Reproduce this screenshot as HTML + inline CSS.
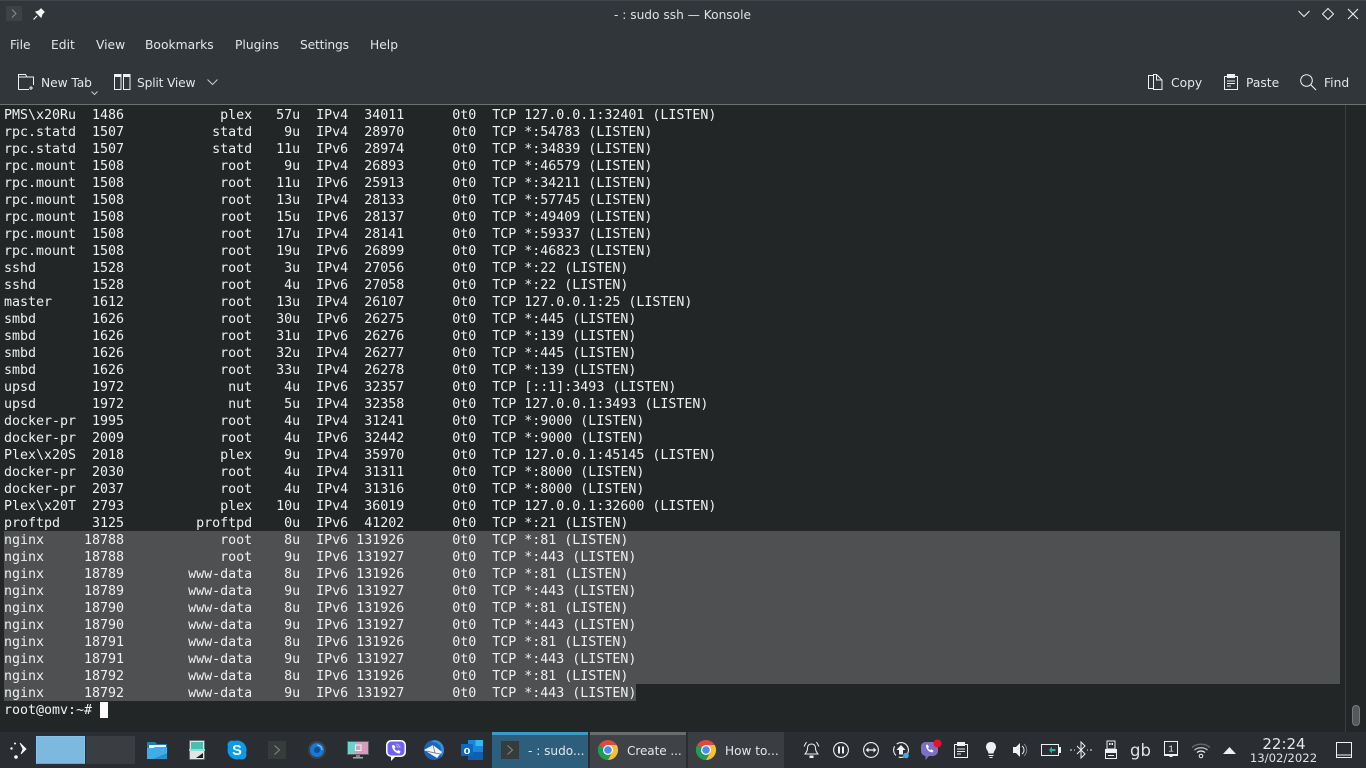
<!DOCTYPE html>
<html><head><meta charset="utf-8"><title>- : sudo ssh — Konsole</title>
<style>
html,body{margin:0;padding:0;background:#232627;width:1366px;height:768px;overflow:hidden}
body{position:relative;font-family:"DejaVu Sans",sans-serif;color:#eff0f1}
.a{position:absolute}
#top{left:0;top:0;width:1366px;height:104px;background:#31363b}
#strip{left:0;top:0;width:1366px;height:1px;background:#41464c}
#line{left:0;top:104px;width:1366px;height:1px;background:#6d7073}
#title{left:0;top:6px;width:1366px;text-align:center;font-size:12.200px;line-height:18px;color:#dfe1e3;padding-right:1px;box-sizing:border-box}
.m{top:37px;font-size:12.300px;line-height:17px;color:#e4e6e8;white-space:nowrap}
.t{top:75px;font-size:12.300px;line-height:17px;color:#e4e6e8;white-space:nowrap}
#term{left:4px;top:107px;margin:0;font-family:"DejaVu Sans Mono",monospace;font-size:13.330px;line-height:17px;color:#eff0f1;white-space:pre;letter-spacing:-.02px}
.s{background:#4f5052;left:4px;width:1336px;top:531px;height:153px}
#bar{left:0;top:732px;width:1366px;height:36px;background:#2a2e32}
.tk{top:732px;height:36px;width:96px}
.tt{top:743px;font-size:12.100px;line-height:17px;color:#e4e6e8;white-space:nowrap}
svg{position:absolute;overflow:visible}
</style></head><body>
<div class="a" id="top"></div><div class="a" id="strip"></div><div class="a" id="line"></div>

<svg style="left:6px;top:6px" width="16" height="16"><rect width="16" height="15" fill="#3d4244"/><path d="M6 3.500l4 4-4 4" fill="none" stroke="#8b8f91"/></svg>
<svg style="left:32px;top:7px" width="14" height="14"><path d="M1.500 12.500l3.500-3.500M4 5l5 5 1-3 2-2-3-3-2 2z" fill="#f4f5f5" stroke="#f4f5f5" stroke-width="1.200"/></svg>
<div class="a" id="title">- : sudo ssh — Konsole</div>
<svg style="left:1298px;top:9px" width="12" height="10"><path d="M.5 2l5.500 5.500L11.500 2" fill="none" stroke="#eff0f1"/></svg>
<svg style="left:1322px;top:8px" width="12" height="12"><path d="M6 .5L11.500 6 6 11.500 .5 6z" fill="none" stroke="#eff0f1"/></svg>
<svg style="left:1347px;top:8px" width="12" height="12"><path d="M1 1l10 10M11 1L1 11" fill="none" stroke="#eff0f1" stroke-width="1.100"/></svg>

<div class="a m" style="left:10px">File</div>
<div class="a m" style="left:51px">Edit</div>
<div class="a m" style="left:96px">View</div>
<div class="a m" style="left:145px">Bookmarks</div>
<div class="a m" style="left:235px">Plugins</div>
<div class="a m" style="left:300px;letter-spacing:-.2px">Settings</div>
<div class="a m" style="left:370px">Help</div>

<svg style="left:18px;top:74px" width="17" height="17"><path d="M.5 15.500V.5h7l1.500 2.500h6.500V11M.5 15.500H11M.5 3h8" fill="none" stroke="#eff0f1"/><path d="M13 12v4M11 14h4" stroke="#eff0f1"/></svg>
<div class="a t" style="left:41px;letter-spacing:-.1px">New Tab</div>
<svg style="left:91px;top:91px" width="7" height="5"><path d="M.5.500L3.500 3.500 6.500.5" fill="none" stroke="#c8cacc"/></svg>
<svg style="left:114px;top:74px" width="17" height="16"><path d="M.5.500h6.500v15H.5zM9.500.5H16v15H9.500z" fill="none" stroke="#eff0f1"/><path d="M0 0h7.500v3H0zM9 0h7.500v3H9z" fill="#eff0f1"/></svg>
<div class="a t" style="left:137px;letter-spacing:-.2px">Split View</div>
<svg style="left:207px;top:79px" width="11" height="7"><path d="M.5.500l5 5 5-5" fill="none" stroke="#c8cacc"/></svg>

<svg style="left:1148px;top:74px" width="15" height="16"><path d="M.5 1.500h5v13H.5zM5.500 .5h3L14 6v9.500H5.500z" fill="none" stroke="#eff0f1"/><path d="M8.500 .5V6H14" fill="none" stroke="#eff0f1"/></svg>
<div class="a t" style="left:1171px">Copy</div>
<svg style="left:1224px;top:74px" width="15" height="16"><rect x=".5" y="2.500" width="13" height="13" fill="none" stroke="#eff0f1"/><rect x="3" y="0" width="8" height="4" fill="#eff0f1"/><path d="M3 7h8M3 9.500h8M3 12h4" stroke="#eff0f1"/></svg>
<div class="a t" style="left:1246px">Paste</div>
<svg style="left:1300px;top:74px" width="17" height="17"><circle cx="6.500" cy="6.500" r="5.800" fill="none" stroke="#eff0f1"/><path d="M10.500 10.500L16 16" stroke="#eff0f1" stroke-width="1.100"/></svg>
<div class="a t" style="left:1324px">Find</div>

<div class="a s"></div>
<div class="a" style="background:#4f5052;left:4px;width:632px;top:684px;height:17px"></div>
<div class="a" style="left:100px;top:702px;width:8px;height:16px;background:#fcfcfc"></div>
<div class="a" style="left:1345px;top:105px;width:1px;height:627px;background:#3a3e40"></div>
<div class="a" style="left:1352px;top:705px;width:8px;height:21px;border-radius:4px;background:#55585a;border:1px solid #76797b;box-sizing:border-box"></div>

<pre class="a" id="term">PMS\x20Ru  1486            plex   57u  IPv4  34011      0t0  TCP 127.0.0.1:32401 (LISTEN)
rpc.statd  1507           statd    9u  IPv4  28970      0t0  TCP *:54783 (LISTEN)
rpc.statd  1507           statd   11u  IPv6  28974      0t0  TCP *:34839 (LISTEN)
rpc.mount  1508            root    9u  IPv4  26893      0t0  TCP *:46579 (LISTEN)
rpc.mount  1508            root   11u  IPv6  25913      0t0  TCP *:34211 (LISTEN)
rpc.mount  1508            root   13u  IPv4  28133      0t0  TCP *:57745 (LISTEN)
rpc.mount  1508            root   15u  IPv6  28137      0t0  TCP *:49409 (LISTEN)
rpc.mount  1508            root   17u  IPv4  28141      0t0  TCP *:59337 (LISTEN)
rpc.mount  1508            root   19u  IPv6  26899      0t0  TCP *:46823 (LISTEN)
sshd       1528            root    3u  IPv4  27056      0t0  TCP *:22 (LISTEN)
sshd       1528            root    4u  IPv6  27058      0t0  TCP *:22 (LISTEN)
master     1612            root   13u  IPv4  26107      0t0  TCP 127.0.0.1:25 (LISTEN)
smbd       1626            root   30u  IPv6  26275      0t0  TCP *:445 (LISTEN)
smbd       1626            root   31u  IPv6  26276      0t0  TCP *:139 (LISTEN)
smbd       1626            root   32u  IPv4  26277      0t0  TCP *:445 (LISTEN)
smbd       1626            root   33u  IPv4  26278      0t0  TCP *:139 (LISTEN)
upsd       1972             nut    4u  IPv6  32357      0t0  TCP [::1]:3493 (LISTEN)
upsd       1972             nut    5u  IPv4  32358      0t0  TCP 127.0.0.1:3493 (LISTEN)
docker-pr  1995            root    4u  IPv4  31241      0t0  TCP *:9000 (LISTEN)
docker-pr  2009            root    4u  IPv6  32442      0t0  TCP *:9000 (LISTEN)
Plex\x20S  2018            plex    9u  IPv4  35970      0t0  TCP 127.0.0.1:45145 (LISTEN)
docker-pr  2030            root    4u  IPv4  31311      0t0  TCP *:8000 (LISTEN)
docker-pr  2037            root    4u  IPv4  31316      0t0  TCP *:8000 (LISTEN)
Plex\x20T  2793            plex   10u  IPv4  36019      0t0  TCP 127.0.0.1:32600 (LISTEN)
proftpd    3125         proftpd    0u  IPv6  41202      0t0  TCP *:21 (LISTEN)
nginx     18788            root    8u  IPv6 131926      0t0  TCP *:81 (LISTEN)
nginx     18788            root    9u  IPv6 131927      0t0  TCP *:443 (LISTEN)
nginx     18789        www-data    8u  IPv6 131926      0t0  TCP *:81 (LISTEN)
nginx     18789        www-data    9u  IPv6 131927      0t0  TCP *:443 (LISTEN)
nginx     18790        www-data    8u  IPv6 131926      0t0  TCP *:81 (LISTEN)
nginx     18790        www-data    9u  IPv6 131927      0t0  TCP *:443 (LISTEN)
nginx     18791        www-data    8u  IPv6 131926      0t0  TCP *:81 (LISTEN)
nginx     18791        www-data    9u  IPv6 131927      0t0  TCP *:443 (LISTEN)
nginx     18792        www-data    8u  IPv6 131926      0t0  TCP *:81 (LISTEN)
nginx     18792        www-data    9u  IPv6 131927      0t0  TCP *:443 (LISTEN)
root@omv:~# </pre>

<div class="a" id="bar"></div>
<!-- kicker -->
<svg style="left:9px;top:742px" width="18" height="18"><circle cx="2.500" cy="6.500" r="1.200" fill="#fff"/><circle cx="6" cy="1.500" r="1" fill="#fff"/><circle cx="7" cy="15" r="1.800" fill="#fff"/><path d="M11 1l6 6-5 5 2-5z" fill="#fff" stroke="#fff" stroke-width=".8"/></svg>
<!-- pager -->
<div class="a" style="left:36px;top:736px;width:49px;height:28px;background:#7db8de;border:1px solid #86c4ea;border-bottom:1px solid #5aa9dc;box-sizing:border-box"></div>
<div class="a" style="left:86px;top:736px;width:49px;height:28px;background:#3a3e43"></div>

<!-- folder -->
<svg style="left:147px;top:741px" width="20" height="18"><path d="M0 1h8l2 2h10v15H0z" fill="#1d7fb3"/><rect x="2" y="4" width="17" height="3" fill="#fff"/><path d="M0 7h6l2-1h12v12H0z" fill="#3daee9"/><path d="M20 12v6H6z" fill="#2a8fc7"/></svg>
<!-- image viewer -->
<svg style="left:189px;top:740px" width="16" height="20"><rect x=".5" y=".5" width="15" height="19" rx="1" fill="#e4e4e4" stroke="#6b6e70"/><rect x="2" y="2" width="12" height="8" fill="#49bfae"/><rect x="0" y="9" width="16" height="2" fill="#7fe6d8"/><path d="M14 18H7l7-5z" fill="#1c1e20"/></svg>
<!-- skype -->
<svg style="left:227px;top:740px" width="20" height="20"><circle cx="10" cy="10" r="9.500" fill="#0a9bea"/><circle cx="5" cy="5" r="4.500" fill="#0a9bea"/><circle cx="15" cy="15" r="4.500" fill="#0a9bea"/><text x="10" y="15" text-anchor="middle" font-family="Liberation Sans" font-weight="bold" font-size="14.500" fill="#fff">S</text></svg>
<!-- konsole -->
<svg style="left:268px;top:741px" width="18" height="18"><rect width="18" height="18" fill="#363b3c"/><path d="M6.500 4.500l5 4.500-5 4.500" fill="none" stroke="#85898a" stroke-width="1"/></svg>
<!-- circle -->
<svg style="left:308px;top:741px" width="18" height="18"><circle cx="9" cy="9" r="9" fill="#3a4248"/><circle cx="9" cy="9" r="7" fill="#1a78d6"/><circle cx="9" cy="9" r="3" fill="#124d8c"/><path d="M9 4a5 5 0 0 1 5 5" stroke="#8fc8f2" fill="none"/></svg>
<!-- monitor -->
<svg style="left:347px;top:741px" width="22" height="19"><rect y="0" width="22" height="14" fill="#5d6163"/><rect x="1" y="1" width="20" height="12" fill="#6fd0cc"/><path d="M11 1h10v12H7z" fill="#d79cbc"/><rect x="8.500" y="4" width="5.500" height="5.500" fill="none" stroke="#f4f4f4"/><rect x="9" y="14" width="4" height="2" fill="#7f8385"/><rect x="6" y="16" width="10" height="1.500" fill="#a4a7a9"/></svg>
<!-- viber -->
<svg style="left:385px;top:739px" width="22" height="23"><path d="M6 1h10a5 5 0 0 1 5 5v7a5 5 0 0 1-5 5H10l-4 4v-4.200A5 5 0 0 1 1 13V6a5 5 0 0 1 5-5z" fill="#fff"/><path d="M6.500 2.500h9a4 4 0 0 1 4 4v6a4 4 0 0 1-4 4h-9a4 4 0 0 1-4-4v-6a4 4 0 0 1 4-4z" fill="#7360f2"/><path d="M7 6.500l2-.8 1.500 2.500-1 1.200c.5 1.200 1.400 2.100 2.600 2.600l1.200-1 2.200 1.500-.8 2c-4 .2-8-4-7.700-8z" fill="#fff"/><path d="M11 5a4 4 0 0 1 4 4M11 7a2 2 0 0 1 2 2" fill="none" stroke="#c9c2f7" stroke-width=".8"/></svg>
<!-- thunderbird -->
<svg style="left:423px;top:740px" width="22" height="20"><circle cx="11" cy="10" r="10" fill="#1d63b8"/><path d="M11 0a10 10 0 0 1 10 10c0 3-1 5-3 7V8C16 3 12 2 8 2z" fill="#2f8fe0"/><path d="M1 10l9-5 9 7-5 6z" fill="#f2f3f5"/><path d="M3 11l9 2 5 1M10 5l2 8" stroke="#5f6b80" stroke-width=".7" fill="none"/></svg>
<!-- outlook -->
<svg style="left:461px;top:740px" width="22" height="20"><rect x="7" y="0" width="15" height="19" fill="#1a86d8"/><rect x="14.500" y="0" width="7.500" height="6" fill="#35b8f0"/><rect x="7" y="12" width="15" height="8" fill="#0f5fae"/><rect x="0" y="4" width="12" height="12" rx="1" fill="#0a6ac2"/><text x="6" y="14" text-anchor="middle" font-family="Liberation Sans" font-weight="bold" font-size="11" fill="#fff">o</text></svg>

<!-- tasks -->
<div class="a tk" style="left:492px;background:#2d5f7d"></div>
<div class="a" style="left:492px;top:732px;width:96px;height:3px;background:#3a9bcb"></div>
<svg style="left:501px;top:741px" width="18" height="18"><rect width="18" height="18" fill="#363b3c"/><path d="M6.500 4.500l5 4.500-5 4.500" fill="none" stroke="#85898a"/></svg>
<div class="a tt" style="left:528px">- : sudo...</div>

<div class="a tk" style="left:590px;background:#3f4348"></div>
<div class="a" style="left:590px;top:732px;width:96px;height:3px;background:#6a6d70"></div>
<svg style="left:598px;top:740px" width="20" height="20"><circle cx="10" cy="10" r="10" fill="#dd4b3e"/><path d="M10 10L1.300 5A10 10 0 0 0 10 20l5-8.700z" fill="#1f9d55"/><path d="M10 5h8.700A10 10 0 0 1 10 20l4.500-8z" fill="#fbc02d"/><circle cx="10" cy="10" r="5" fill="#fff"/><circle cx="10" cy="10" r="3.800" fill="#4b8bf5"/></svg>
<div class="a tt" style="left:627px;letter-spacing:-.1px">Create ...</div>

<div class="a tk" style="left:688px;background:#3a3e43"></div>
<svg style="left:696px;top:740px" width="20" height="20"><circle cx="10" cy="10" r="10" fill="#dd4b3e"/><path d="M10 10L1.300 5A10 10 0 0 0 10 20l5-8.700z" fill="#1f9d55"/><path d="M10 5h8.700A10 10 0 0 1 10 20l4.500-8z" fill="#fbc02d"/><circle cx="10" cy="10" r="5" fill="#fff"/><circle cx="10" cy="10" r="3.800" fill="#4b8bf5"/></svg>
<div class="a tt" style="left:725px">How to...</div>

<!-- tray -->
<svg style="left:803px;top:741px" width="17" height="18"><path d="M8.500 3c-3 0-4 2-4 4.500 0 3-1.500 4-2.500 5.500h13c-1-1.500-2.500-2.500-2.500-5.500C12.500 5 11.500 3 8.500 3z" fill="none" stroke="#eff0f1"/><path d="M6.500 14.500h4V17h-4z" fill="#eff0f1"/><path d="M1 5.500L3.500 1M16 5.500L13.500 1" stroke="#eff0f1" fill="none"/></svg>
<svg style="left:833px;top:742px" width="16" height="16"><circle cx="8" cy="8" r="7.400" fill="none" stroke="#eff0f1" stroke-width="1.100"/><path d="M5 4.500h2v7H5zM9 4.500h2v7H9z" fill="#eff0f1"/></svg>
<svg style="left:863px;top:742px" width="16" height="16"><circle cx="8" cy="8" r="7.400" fill="none" stroke="#eff0f1" stroke-width="1.100"/><path d="M5 8h6" stroke="#eff0f1" stroke-width="1.300"/><path d="M2.700 8L5.500 5.500v5zM13.300 8L10.500 5.500v5z" fill="#eff0f1"/></svg>
<svg style="left:893px;top:742px" width="18" height="18"><circle cx="8" cy="8" r="7.400" fill="none" stroke="#eff0f1" stroke-width="1.100" stroke-dasharray="14 3 10 3 20 0"/><path d="M8 3l4.500 5H10v4.500H6V8H3.500z" fill="#eff0f1"/><circle cx="13" cy="13.500" r="2.800" fill="#3daee9"/></svg>
<svg style="left:920px;top:739px" width="22" height="22"><path d="M5 3h8a5 5 0 0 1 5 5v4a5 5 0 0 1-5 5H9l-3.500 4v-4A5 5 0 0 1 1 12V7a5 5 0 0 1 4-4z" fill="#7e6fc4"/><path d="M6 6l1.500-.5 1.500 2.500-1 1c.5 1 1.200 1.700 2.200 2.200l1-1 2.300 1.500-.6 1.500C9.500 14 5.700 10 6 6z" fill="#fff"/><circle cx="17.500" cy="4.500" r="4" fill="#e8102a"/></svg>
<svg style="left:954px;top:742px" width="14" height="16"><rect x=".5" y="2.500" width="13" height="13" fill="none" stroke="#eff0f1"/><rect x="3" y="0" width="8" height="4" fill="#eff0f1"/><path d="M3 7h8M3 9.500h8M3 12h4" stroke="#eff0f1"/></svg>
<svg style="left:985px;top:742px" width="12" height="16"><path d="M6 0c3.300 0 5 2.300 5 5 0 2.500-2 3.500-2.500 6.500h-5C3 8.500 1 7.500 1 5c0-2.700 1.700-5 5-5z" fill="#eff0f1"/><path d="M3.500 13h5v1h-5zM4.500 15h3v1h-3z" fill="#eff0f1"/></svg>
<svg style="left:1013px;top:742px" width="17" height="16"><path d="M0 5h3l4-4v14l-4-4H0z" fill="#eff0f1"/><path d="M9 4a5 5 0 0 1 0 8" fill="none" stroke="#eff0f1"/><path d="M11 2a8 8 0 0 1 0 12" fill="none" stroke="#7f8285"/></svg>
<svg style="left:1041px;top:744px" width="20" height="12"><rect x=".5" y=".5" width="17" height="11" fill="none" stroke="#eff0f1"/><rect x="18" y="3" width="2" height="6" fill="#eff0f1"/><path d="M8 6l3-3.500v2.500h3.500v2H11v2.500z" fill="#1abc9c"/></svg>
<svg style="left:1070px;top:741px" width="22" height="18"><path d="M7 5l8 8-4 4V1l4 4-8 8" fill="none" stroke="#eff0f1"/><path d="M0 9h2M4 9h1M17 9h1M20 9h2" stroke="#eff0f1"/></svg>
<svg style="left:1105px;top:741px" width="12" height="18"><rect x="2" y="0" width="8" height="8" fill="none" stroke="#eff0f1"/><path d="M4 2h1.500v2H4zM6.500 2H8v2H6.500z" fill="#eff0f1"/><path d="M0 8h12v10H0z" fill="#eff0f1"/><rect x="1" y="12" width="10" height="5" fill="#2a2e32"/><rect x="3" y="14" width="6" height="1" fill="#eff0f1"/></svg>
<div class="a" style="left:1130px;top:741px;font-size:16.500px;line-height:20px;color:#dfe1e3">gb</div>
<svg style="left:1164px;top:741px" width="14" height="17"><rect x=".5" y=".5" width="13" height="13" fill="none" stroke="#eff0f1"/><path d="M0 13h14v2H9l-1 1H6l-1-1H0z" fill="#eff0f1"/><text x="7" y="10.500" text-anchor="middle" font-family="Liberation Mono" font-size="9" fill="#eff0f1">1</text></svg>
<svg style="left:1191px;top:742px" width="20" height="16"><path d="M1 5.500C6 1 14 1 19 5.500" fill="none" stroke="#6c6f72" stroke-width="1.200"/><path d="M3.500 8C7 5 13 5 16.500 8" fill="none" stroke="#c8cacc" stroke-width="1.200"/><path d="M6 10.500c2.400-2 5.600-2 8 0" fill="none" stroke="#eff0f1" stroke-width="1.200"/><circle cx="10" cy="14" r="1.800" fill="none" stroke="#eff0f1"/></svg>
<svg style="left:1223px;top:747px" width="13" height="8"><path d="M6.500 0L13 7H0z" fill="#eff0f1"/></svg>
<div class="a" style="left:1243px;top:735px;width:80px;text-align:center;font-size:15px;line-height:18px;color:#e4e6e8;padding-left:2px;box-sizing:border-box">22:24</div>
<div class="a" style="left:1243px;top:750px;width:80px;text-align:center;font-size:11.700px;line-height:16px;color:#dfe1e3;padding-left:1px;box-sizing:border-box">13/02/2022</div>
<svg style="left:1336px;top:742px" width="16" height="16"><rect x=".5" y=".5" width="15" height="15" fill="none" stroke="#eff0f1"/><path d="M1 13h14" stroke="#eff0f1"/></svg>
</body></html>
